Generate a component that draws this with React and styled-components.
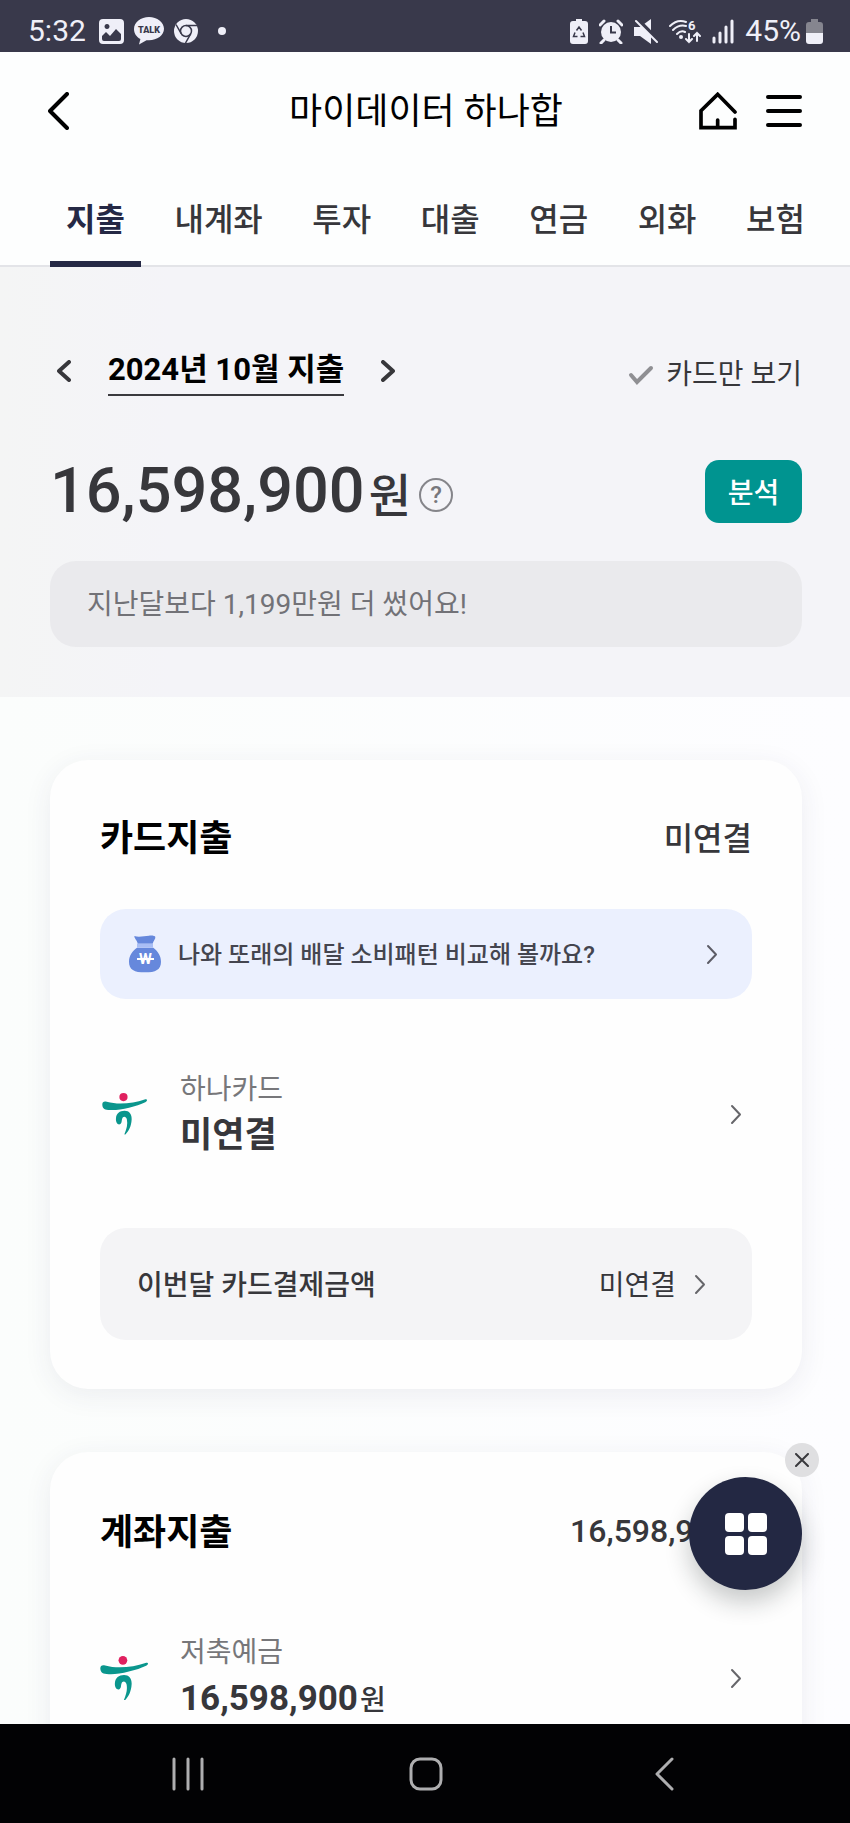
import * as React from "react";
import styled, { createGlobalStyle } from "styled-components";

const TABS = ["지출", "내계좌", "투자", "대출", "연금", "외화", "보험"];

function Chevron({ left, width, height, stroke }) {
  return (
    <svg width={width} height={height} viewBox={`0 0 ${width} ${height}`} fill="none" aria-hidden="true">
      <path
        d={
          left
            ? `M${width - 2} 2L2 ${height / 2}L${width - 2} ${height - 2}`
            : `M2 2L${width - 2} ${height / 2}L2 ${height - 2}`
        }
        stroke="currentColor"
        strokeWidth={stroke}
        strokeLinecap="round"
        strokeLinejoin="round"
      />
    </svg>
  );
}

function HanaLogo({ size }) {
  return (
    <svg width={size} viewBox="0 0 132 122" aria-hidden="true">
      <circle cx="63" cy="12" r="12" fill="#e0205f" />
      <path
        d="M1 36C0 26 6 24 14 26C50 36 92 30 125 19C134 17 134 23 127 27C100 40 50 52 24 50C8 50 2 46 1 36Z"
        fill="#0a968d"
      />
      <path
        d="M66 120C72 106 76 92 73 78C71 68 61 67 59 76C57 82 59 88 52 92C44 93 40 84 41 74C42 60 52 52 66 52C80 52 88 62 87 78C86 98 78 113 70 120C68 122 65 123 66 120Z"
        fill="#0a968d"
      />
    </svg>
  );
}

function StatusIcons() {
  return (
    <>
      <svg width="25" height="25" viewBox="0 0 25 25" aria-hidden="true">
        <path
          fill="currentColor"
          fillRule="evenodd"
          d="M4 0h17a4 4 0 0 1 4 4v17a4 4 0 0 1-4 4H4a4 4 0 0 1-4-4V4a4 4 0 0 1 4-4zM3 17v3a2 2 0 0 0 2 2h15a2 2 0 0 0 2-2v-5l-5-5l-6 7l-4-4zM8 5a2.500 2.500 0 1 0 .01 0z"
        />
      </svg>
      <svg width="30" height="28" viewBox="0 0 30 28" aria-hidden="true">
        <path
          fill="currentColor"
          d="M15 0C6.800 0 0 5.200 0 12c0 4.400 2.500 8 6.400 10L5 27.500l7.500-4.300c.8.1 1.700.1 2.500.1c8.200 0 15-5 15-11.500S23.200 0 15 0z"
        />
        <text x="15" y="16" fill="#39394b" fontFamily="Roboto, sans-serif" fontWeight="900" fontSize="9" textAnchor="middle">
          TALK
        </text>
      </svg>
      <svg width="24" height="24" viewBox="0 0 24 24" fill="none" aria-hidden="true">
        <circle cx="12" cy="12" r="12" fill="currentColor" />
        <g stroke="#39394b" strokeWidth="1.500">
          <circle cx="12" cy="12" r="5.500" />
          <path d="M12 6.500H23M7.200 14.700L2 5.500M16.800 14.700L11.500 24" />
        </g>
      </svg>
    </>
  );
}

function SystemIcons() {
  return (
    <>
      <svg width="18" height="25" viewBox="0 0 18 25" aria-hidden="true">
        <path fill="currentColor" d="M6 0h6v2h3a3 3 0 0 1 3 3v17a3 3 0 0 1-3 3H3a3 3 0 0 1-3-3V5a3 3 0 0 1 3-3h3z" />
        <path
          d="M6.500 11.500L9 8l2.500 3.500M13 13.500l1.500 4H10.500M7.500 17.500H3.500l1.500-4"
          fill="none"
          stroke="#39394b"
          strokeWidth="1.500"
        />
      </svg>
      <svg width="24" height="25" viewBox="0 0 24 25" fill="none" aria-hidden="true">
        <circle cx="12" cy="13" r="10" fill="currentColor" />
        <path d="M1 6l4-4M23 6l-4-4M5 21l-3 3M19 21l3 3" stroke="currentColor" strokeWidth="3" strokeLinecap="round" />
        <path d="M12 7v6.500h5" stroke="#39394b" strokeWidth="2" />
      </svg>
      <svg width="24" height="25" viewBox="0 0 24 25" fill="none" aria-hidden="true">
        <path d="M0 8h6L17 0v25L6 17H0z" fill="currentColor" />
        <path d="M3 0L24 21" stroke="#39394b" strokeWidth="4" />
        <path d="M2 2l21 21" stroke="currentColor" strokeWidth="2" strokeLinecap="round" />
      </svg>
      <svg width="32" height="33" viewBox="0 -4 32 33" fill="none" aria-hidden="true">
        <g stroke="currentColor" strokeWidth="2" strokeLinecap="round">
          <path d="M1 7C6 2 12 1 17 3M4 11c4-4 9-5 13-4M8 15c3-3 6-3 8-2" />
          <path d="M20 15v8M17 20l3 3l3-3M28 22v-8M25 17l3-3l3 3" />
        </g>
        <circle cx="12" cy="18" r="2" fill="currentColor" />
        <text x="19" y="11" fill="currentColor" fontFamily="Roboto, sans-serif" fontWeight="700" fontSize="13">
          6
        </text>
      </svg>
      <svg width="22" height="25" viewBox="0 0 22 25" aria-hidden="true">
        <path
          d="M2 19v4M8 14v9M14 8v15M20 2v21"
          stroke="currentColor"
          strokeWidth="3"
          strokeLinecap="round"
        />
      </svg>
    </>
  );
}

function MoneyBag() {
  return (
    <svg width="32" height="38" viewBox="0 0 96 114" aria-hidden="true">
      <path
        fill="#6688dc"
        d="M16 3C32 8 46 2 60 2C70 1 79 3 79 6C80 12 73 18 71 26H26C25 16 16 12 16 3ZM24 38H73C88 49 96 64 96 80C96 104 80 112 48 112S0 104 0 80C0 62 10 48 24 38Z"
      />
      <path fill="#a9bef5" d="M24 26h48v12H24z" />
      <text x="49" y="88" fill="#fff" fontFamily="Roboto, sans-serif" fontWeight="700" fontSize="44" textAnchor="middle">
        W
      </text>
      <path d="M24 72H75" stroke="#fff" strokeWidth="6" />
    </svg>
  );
}

function AccountRow({ logo, label, children, gap }) {
  return (
    <Account href="#account" gap={gap}>
      <LogoSlot>
        <HanaLogo size={logo} />
      </LogoSlot>
      <AccountText>
        <AccountLabel>{label}</AccountLabel>
        <AccountValue>{children}</AccountValue>
      </AccountText>
      <RowArrow>
        <Chevron width={12} height={21} stroke={2} />
      </RowArrow>
    </Account>
  );
}

export default function App() {
  const [tab, setTab] = React.useState(TABS[0]);

  return (
    <Screen>
      <GlobalStyle />
      <StatusBar>
        <StatusGroup gap={10}>
          <StatusText>5:32</StatusText>
          <StatusIcons />
          <Dot />
        </StatusGroup>
        <StatusGroup gap={11}>
          <SystemIcons />
          <BatteryGroup>
            <StatusText>45%</StatusText>
            <svg width="17" height="25" viewBox="0 0 17 25" aria-hidden="true">
              <path fill="#85858f" d="M5 0h7v3h2a3 3 0 0 1 3 3v9H0V6a3 3 0 0 1 3-3h2z" />
              <path fill="currentColor" d="M0 14h17v8a3 3 0 0 1-3 3H3a3 3 0 0 1-3-3z" />
            </svg>
          </BatteryGroup>
        </StatusGroup>
      </StatusBar>

      <Header>
        <IconButton aria-label="뒤로">
          <Chevron left width={21} height={38} stroke={4} />
        </IconButton>
        <Title>마이데이터 하나합</Title>
        <HeaderActions>
          <IconButton aria-label="홈">
            <svg width="38" height="38" viewBox="0 0 114 114" fill="none">
              <path
                d="M108 60L56 7L6 56V107H108V82M56 84V104"
                stroke="currentColor"
                strokeWidth="11"
                strokeLinecap="round"
              />
            </svg>
          </IconButton>
          <IconButton aria-label="메뉴">
            <svg width="36" height="34" viewBox="0 0 36 34">
              <path d="M2 3H34M2 17H34M2 31H34" stroke="currentColor" strokeWidth="4" strokeLinecap="round" />
            </svg>
          </IconButton>
        </HeaderActions>
      </Header>

      <Tabs>
        {TABS.map((name) => (
          <Tab key={name} active={name === tab} onClick={() => setTab(name)}>
            {name}
          </Tab>
        ))}
      </Tabs>

      <Main>
        <Summary>
          <MonthRow>
            <MonthPicker>
              <MonthArrow aria-label="이전 달">
                <Chevron left width={14} height={22} stroke={4} />
              </MonthArrow>
              <Month>2024년 10월 지출</Month>
              <MonthArrow aria-label="다음 달">
                <Chevron width={14} height={22} stroke={4} />
              </MonthArrow>
            </MonthPicker>
            <CardOnly>
              <CheckBox>
                <input type="checkbox" />
                <svg width="26" height="20" viewBox="0 0 26 20" fill="none" aria-hidden="true">
                  <path d="M3 10L9 17L23 3" stroke="currentColor" strokeWidth="4" strokeLinecap="round" />
                </svg>
              </CheckBox>
              카드만 보기
            </CardOnly>
          </MonthRow>

          <TotalRow>
            <Total>
              16,598,900<TotalUnit>원</TotalUnit>
            </Total>
            <Help aria-label="도움말">?</Help>
            <Analyze>분석</Analyze>
          </TotalRow>

          <Notice>지난달보다 1,199만원 더 썼어요!</Notice>
        </Summary>

        <Cards>
          <Card>
            <CardHeader>
              <CardTitle>카드지출</CardTitle>
              <CardAmount>미연결</CardAmount>
            </CardHeader>
            <Promo href="#compare">
              <MoneyBag />
              <PromoText>나와 또래의 배달 소비패턴 비교해 볼까요?</PromoText>
              <Chevron width={12} height={21} stroke={2} />
            </Promo>
            <AccountRow logo={45} label="하나카드" gap={67}>
              미연결
            </AccountRow>
            <Payment href="#payment">
              <PaymentLabel>이번달 카드결제금액</PaymentLabel>
              <span>미연결</span>
              <Chevron width={12} height={21} stroke={2} />
            </Payment>
          </Card>

          <Card>
            <CardHeader>
              <CardTitle>계좌지출</CardTitle>
              <CardAmount>
                16,598,900<small>원</small>
              </CardAmount>
            </CardHeader>
            <AccountRow logo={48} label="저축예금" gap={71}>
              16,598,900<small>원</small>
            </AccountRow>
          </Card>
        </Cards>
      </Main>

      <Fab aria-label="전체 서비스">
        <svg width="42" height="42" viewBox="0 0 42 42" fill="#fff">
          <rect width="19" height="19" rx="4" />
          <rect x="23" width="19" height="19" rx="4" />
          <rect y="23" width="19" height="19" rx="4" />
          <rect x="23" y="23" width="19" height="19" rx="4" />
        </svg>
      </Fab>
      <FabClose aria-label="닫기">
        <svg width="14" height="14" viewBox="0 0 14 14">
          <path d="M1 1L13 13M13 1L1 13" stroke="currentColor" strokeWidth="2" strokeLinecap="round" />
        </svg>
      </FabClose>

      <SystemNav>
        <NavButton aria-label="최근 앱">
          <svg width="32" height="34" viewBox="0 0 32 34">
            <path d="M2 2V32M16 2V32M30 2V32" stroke="currentColor" strokeWidth="3" strokeLinecap="round" />
          </svg>
        </NavButton>
        <NavButton aria-label="홈 화면">
          <svg width="34" height="34" viewBox="0 0 34 34" fill="none">
            <rect x="2" y="2" width="30" height="30" rx="9" stroke="currentColor" strokeWidth="3" />
          </svg>
        </NavButton>
        <NavButton aria-label="이전">
          <Chevron left width={19} height={34} stroke={3} />
        </NavButton>
      </SystemNav>
    </Screen>
  );
}

const GlobalStyle = createGlobalStyle`
  * {
    box-sizing: border-box;
  }

  body {
    margin: 0;
    font-family: Roboto, "Noto Sans CJK KR", sans-serif;
    color: #37373b;
  }

  button {
    padding: 0;
    border: 0;
    background: none;
    font: inherit;
    color: inherit;
    cursor: pointer;
  }

  a {
    color: inherit;
    text-decoration: none;
  }

  svg {
    display: block;
    flex-shrink: 0;
  }
`;

const Screen = styled("div")`
  position: relative;
  display: flex;
  flex-direction: column;
  height: 100vh;
  overflow: hidden;
  background: #fdfefe;
`;

const StatusBar = styled("div")`
  flex-shrink: 0;
  display: flex;
  justify-content: space-between;
  height: 52px;
  padding: 10px 27px 0 28px;
  color: #efeff8;
  background: #39394b;
`;

const StatusGroup = styled("div")`
  display: flex;
  align-items: center;
  gap: ${(props) => props.gap}px;
`;

const StatusText = styled("span")`
  margin-right: 3px;
  font-size: 30px;
  line-height: 42px;
`;

const BatteryGroup = styled("div")`
  display: flex;
  align-items: center;
  gap: 2px;
`;

const Dot = styled("span")`
  width: 8px;
  height: 8px;
  margin-left: 10px;
  border-radius: 50%;
  background: currentColor;
`;

const Header = styled("header")`
  flex-shrink: 0;
  display: grid;
  grid-template-columns: 1fr auto 1fr;
  align-items: center;
  height: 118px;
  padding: 0 48px;
  color: #000;
`;

const IconButton = styled("button")`
  justify-self: start;
`;

const Title = styled("h1")`
  margin: 0;
  padding: 2px 0 0 2px;
  font-size: 36px;
  font-weight: 400;
  line-height: 52px;
`;

const HeaderActions = styled("div")`
  justify-self: end;
  display: flex;
  align-items: center;
  gap: 29px;
`;

const Tabs = styled("nav")`
  flex-shrink: 0;
  display: flex;
  justify-content: space-between;
  height: 97px;
  padding: 0 29px 0 50px;
  box-shadow: inset 0 -2px #e3e4e8;
`;

const Tab = styled("button")`
  padding: 2px 16px 0;
  border-bottom: 6px solid ${(props) => (props.active ? "#252945" : "transparent")};
  font-size: 32px;
  font-weight: ${(props) => (props.active ? 700 : 500)};
  color: ${(props) => (props.active ? "#252945" : "#37373b")};
  white-space: nowrap;
`;

const Main = styled("main")`
  flex: 1;
  min-height: 0;
  overflow: hidden;
  background: linear-gradient(90deg, #fbfdfc, #fdfdff);
`;

const Summary = styled("section")`
  padding: 79px 48px 50px 50px;
  background: linear-gradient(90deg, #f4f5f5, #f4f4f8 20%);
`;

const MonthRow = styled("div")`
  display: flex;
  justify-content: space-between;
  align-items: flex-end;
`;

const MonthPicker = styled("div")`
  display: flex;
  align-items: center;
  gap: 30px;
`;

const MonthArrow = styled("button")`
  display: flex;
  justify-content: center;
  width: 28px;
`;

const Month = styled("button")`
  border-bottom: 2px solid #3a3a3e;
  font-size: 31px;
  font-weight: 700;
  line-height: 48px;
  color: #000;
`;

const CardOnly = styled("label")`
  display: flex;
  align-items: center;
  gap: 12px;
  font-size: 28px;
  line-height: 42px;
`;

const CheckBox = styled("span")`
  display: grid;
  color: #8f8f93;

  input,
  svg {
    grid-area: 1 / 1;
    margin: 0;
  }

  input {
    appearance: none;
  }

  input:checked + svg {
    color: #009490;
  }
`;

const TotalRow = styled("div")`
  display: flex;
  align-items: center;
  height: 64px;
  margin-top: 63px;
`;

const Total = styled("strong")`
  padding-top: 4px;
  font-size: 63px;
  font-weight: 500;
  line-height: 64px;
`;

const TotalUnit = styled("span")`
  margin-left: 4px;
  font-size: 46px;
`;

const Help = styled("button")`
  width: 34px;
  height: 34px;
  margin: 8px auto 0 8px;
  border: 2px solid #85858a;
  border-radius: 50%;
  font-size: 24px;
  font-weight: 500;
  line-height: 28px;
  color: #77777c;
`;

const Analyze = styled("button")`
  width: 97px;
  height: 63px;
  border-radius: 14px;
  background: #009490;
  font-size: 28px;
  font-weight: 500;
  color: #fff;
`;

const Notice = styled("p")`
  margin: 38px 0 0;
  padding: 22px 37px 20px;
  border-radius: 26px;
  background: #eaeaed;
  font-size: 28px;
  line-height: 44px;
  color: #727277;
`;

const Cards = styled("div")`
  display: flex;
  flex-direction: column;
  gap: 63px;
  padding: 63px 48px 63px 50px;
`;

const Card = styled("section")`
  padding: 55px 50px 49px;
  border-radius: 38px;
  background: #fefefe;
  box-shadow: 0 6px 28px rgba(50, 50, 90, 0.08);
`;

const CardHeader = styled("div")`
  display: flex;
  justify-content: space-between;
  align-items: center;
`;

const CardTitle = styled("h2")`
  margin: 0;
  font-size: 36px;
  font-weight: 700;
  line-height: 48px;
  color: #000;
`;

const CardAmount = styled("span")`
  font-size: 32px;
  font-weight: 500;
  line-height: 48px;

  small {
    font-size: 24px;
  }
`;

const Promo = styled("a")`
  display: flex;
  align-items: center;
  gap: 17px;
  height: 90px;
  margin-top: 46px;
  padding: 0 34px 0 29px;
  border-radius: 26px;
  background: #ebf0fe;
  color: #5c5c66;
`;

const PromoText = styled("span")`
  flex: 1;
  padding-bottom: 4px;
  font-size: 24px;
  font-weight: 500;
  color: #44454f;
`;

const Account = styled("a")`
  display: flex;
  align-items: center;
  gap: 32px;
  margin-top: ${(props) => props.gap}px;
`;

const LogoSlot = styled("span")`
  display: flex;
  justify-content: center;
  width: 48px;
`;

const AccountText = styled("span")`
  flex: 1;
  padding-top: 4px;
`;

const AccountLabel = styled("span")`
  display: block;
  font-size: 28px;
  line-height: 40px;
  color: #77777a;
`;

const AccountValue = styled("strong")`
  display: block;
  font-size: 35px;
  font-weight: 700;
  line-height: 52px;

  small {
    margin-left: 2px;
    font-size: 28px;
    font-weight: 500;
  }
`;

const RowArrow = styled("span")`
  padding-right: 10px;
  color: #66666a;
`;

const Payment = styled("a")`
  display: flex;
  align-items: center;
  gap: 18px;
  height: 112px;
  margin-top: 66px;
  padding: 0 46px 0 37px;
  border-radius: 26px;
  background: #f4f4f6;
  font-size: 28px;

  span {
    padding-bottom: 2px;
  }

  svg {
    color: #66666a;
  }
`;

const PaymentLabel = styled("span")`
  flex: 1;
  font-weight: 500;
`;

const Fab = styled("button")`
  position: absolute;
  right: 48px;
  bottom: 233px;
  display: flex;
  justify-content: center;
  align-items: center;
  width: 113px;
  height: 113px;
  border-radius: 50%;
  background: #232843;
  box-shadow: 0 12px 24px rgba(20, 30, 30, 0.24);
`;

const FabClose = styled("button")`
  position: absolute;
  right: 31px;
  bottom: 346px;
  display: flex;
  justify-content: center;
  align-items: center;
  width: 34px;
  height: 34px;
  border-radius: 50%;
  background: #dfdfe1;
  color: #39393d;
`;

const SystemNav = styled("nav")`
  flex-shrink: 0;
  display: flex;
  justify-content: center;
  gap: 138px;
  height: 99px;
  padding-left: 2px;
  background: #020204;
  color: #aeaeb0;
`;

const NavButton = styled("button")`
  display: flex;
  justify-content: center;
  align-items: center;
  width: 100px;
`;
